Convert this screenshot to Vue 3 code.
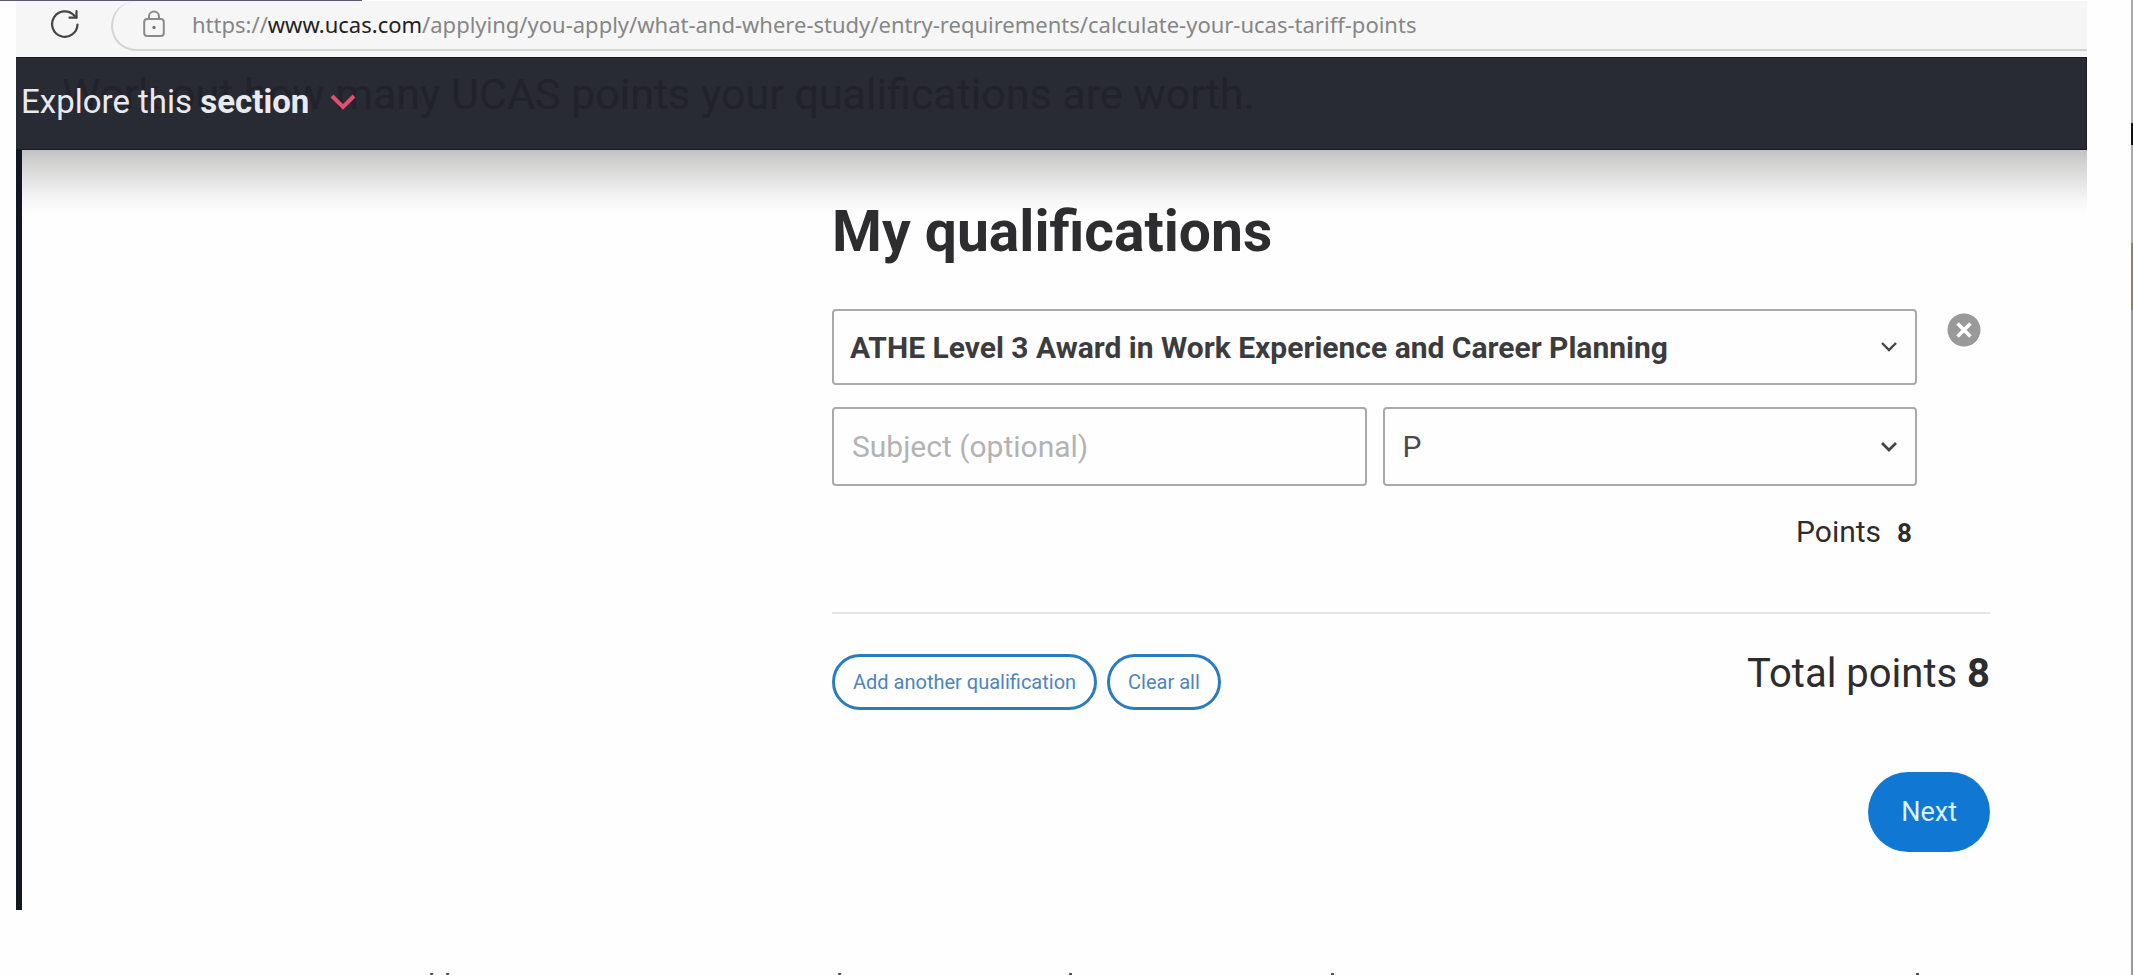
<script setup>
import { ref } from 'vue'

const qualification = ref('ATHE Level 3 Award in Work Experience and Career Planning')
const subject = ref('')
const grade = ref('P')
const tips = [431, 447, 839, 1070, 1332, 1917]
</script>

<template>
  <div class="page">
    <div class="column">
      <div class="window">
        <div class="toolbar">
          <button class="reload" type="button" aria-label="Reload">
            <svg width="30" height="30" viewBox="0 0 30 30" fill="none" stroke="#444" stroke-width="2.2" stroke-linecap="round" stroke-linejoin="round">
              <path d="M27.500 15.500a12.700 12.700 0 1 1-3.500-9.200L26.300 8.500" />
              <path d="M26.500 2v6.700h-7" />
            </svg>
          </button>
          <div class="address">
            <svg class="lock" width="22" height="28" viewBox="0 0 22 28" fill="none" stroke="#8b8b8b" stroke-width="2">
              <rect x="1.200" y="9" width="19.600" height="17" rx="3" />
              <path d="M6 9V6.500a5 5 0 0 1 10 0V9" />
              <circle cx="11" cy="17.500" r="1.700" fill="#777" stroke="none" />
            </svg>
            <span class="url">https://<span class="domain">www.ucas.com</span>/applying/you-apply/what-and-where-study/entry-requirements/calculate-your-ucas-tariff-points</span>
          </div>
        </div>

        <header class="section-bar">
          <p class="behind">Work out how many UCAS points your qualifications are worth.</p>
          <button class="explore" type="button">
            <span>Explore this <b>section</b></span>
            <svg width="26" height="18" viewBox="0 0 26 18" fill="none" stroke="#e2506f" stroke-width="4">
              <path d="M2 3l11 11L24 3" />
            </svg>
          </button>
        </header>

        <main class="main">
          <section class="content">
            <h1>My qualifications</h1>
            <div class="entry">
              <div class="fields">
                <div class="pick">
                  <select v-model="qualification" class="control strong" aria-label="Qualification">
                    <option>ATHE Level 3 Award in Work Experience and Career Planning</option>
                  </select>
                  <svg class="chevron" width="16" height="12" viewBox="0 0 16 12" fill="none" stroke="#444" stroke-width="2.400"><path d="M1 2l7 7 7-7" /></svg>
                </div>
                <div class="pair">
                  <input v-model="subject" class="control tall" type="text" placeholder="Subject (optional)" aria-label="Subject (optional)" />
                  <div class="pick">
                    <select v-model="grade" class="control tall" aria-label="Grade">
                      <option>P</option>
                    </select>
                    <svg class="chevron" width="16" height="12" viewBox="0 0 16 12" fill="none" stroke="#444" stroke-width="2.800"><path d="M1 2l7 7 7-7" /></svg>
                  </div>
                </div>
                <p class="points">Points <b>8</b></p>
              </div>
              <button class="remove" type="button" aria-label="Remove qualification">
                <svg width="34" height="34" viewBox="0 0 34 34">
                  <circle cx="17" cy="17" r="16.500" fill="#999" />
                  <path d="M10.500 10.500l13 13M23.500 10.500l-13 13" stroke="#fff" stroke-width="3.600" />
                </svg>
              </button>
            </div>
            <div class="summary">
              <div class="actions">
                <button class="outline" type="button">Add another qualification</button>
                <button class="outline" type="button">Clear all</button>
              </div>
              <p class="total">Total points <b>8</b></p>
            </div>
            <button class="next" type="button">Next</button>
          </section>
        </main>
      </div>
      <svg class="tips" height="2" viewBox="0 0 2131 2" preserveAspectRatio="none" aria-hidden="true">
        <rect v-for="x in tips" :key="x" :x="x - 1" y="0" width="3" height="2" fill="#555" />
      </svg>
    </div>
    <div class="edge"></div>
  </div>
</template>

<style>
body {
  margin: 0;
  background: #fefefe;
}
</style>

<style scoped>
.page {
  display: flex;
  min-height: 100vh;
  font-family: Roboto, "Liberation Sans", sans-serif;
  color: #2d2d2f;
}
.column {
  flex: 1;
  min-width: 0;
  display: flex;
  flex-direction: column;
  justify-content: space-between;
  padding-top: 1px;
  background: linear-gradient(to right, #5c5878, #5c5878) no-repeat 0 0 / 17% 1px;
}
.edge {
  width: 2px;
  background: linear-gradient(#aaa 0 123px, #111 123px 145px, #aaa 145px 243px, #8d8258 243px 310px, #999 310px);
}
p, h1 {
  margin: 0;
}
button {
  font: inherit;
  cursor: pointer;
}
.window {
  margin: 0 44px 0 16px;
}
.toolbar {
  display: flex;
  align-items: flex-start;
  gap: 31px;
  padding: 0 0 6px 33px;
  background: #f6f6f6;
}
.reload {
  margin-top: 8px;
  padding: 0;
  width: 31px;
  height: 30px;
  border: 0;
  background: none;
}
.address {
  flex: 1;
  box-sizing: border-box;
  display: flex;
  align-items: center;
  gap: 27px;
  height: 50px;
  padding-left: 30px;
  padding-bottom: 2px;
  border: 2px solid #d3d4d3;
  border-top: 0;
  border-right: 0;
  border-radius: 25px 0 0 25px;
}
.url {
  font-family: "Noto Sans", sans-serif;
  font-size: 22px;
  line-height: 30px;
  white-space: nowrap;
  color: #868686;
}
.domain {
  color: #222;
}
.section-bar {
  position: relative;
  box-sizing: border-box;
  height: 93px;
  padding: 24px 0 0 5px;
  background: #282a34;
  border: 1px solid #191b23;
  border-left: 0;
}
.behind {
  position: absolute;
  left: 46px;
  top: 10px;
  font-size: 43px;
  line-height: 52px;
  white-space: nowrap;
  color: #21222b;
}
.explore {
  position: relative;
  display: flex;
  align-items: center;
  gap: 21px;
  padding: 0;
  border: 0;
  background: none;
  color: #e9e9ee;
  font-size: 33px;
  line-height: 40px;
}
.main {
  padding-bottom: 58px;
  border-left: 6px solid #111824;
  background: linear-gradient(#c3c3c5 0, #cfcfcd 10px, #dedede 25px, #ebebeb 38px, #f6f6f6 50px, #fefefe 66px);
}
.content {
  max-width: 1158px;
  margin: 0 97px 0 auto;
  padding-top: 46px;
}
h1 {
  font-size: 57px;
  line-height: 72px;
  font-weight: 700;
}
.entry {
  display: flex;
  align-items: flex-start;
  gap: 30px;
  margin-top: 41px;
  padding-bottom: 61px;
  border-bottom: 2px solid #e4e4e4;
}
.fields {
  flex: 1;
}
.pick {
  position: relative;
}
.control {
  box-sizing: border-box;
  display: block;
  width: 100%;
  height: 76px;
  margin: 0;
  padding: 0 18px;
  border: 2px solid #a9a9a9;
  border-radius: 4px;
  background: #fefefe;
  appearance: none;
  font-family: inherit;
  font-size: 30px;
  color: #4a4a4c;
}
.control.tall {
  height: 79px;
}
.control.strong {
  padding: 0 16px;
  font-weight: 700;
  color: #3c3c3e;
}
.control::placeholder {
  color: #b3b3b3;
  opacity: 1;
}
.chevron {
  position: absolute;
  right: 20px;
  top: 50%;
  margin-top: -6px;
  pointer-events: none;
}
.pair {
  display: grid;
  grid-template-columns: 1fr 1fr;
  gap: 16px;
  margin-top: 22px;
}
.points {
  display: flex;
  justify-content: flex-end;
  align-items: baseline;
  gap: 16px;
  margin-top: 28px;
  padding-right: 5px;
  font-size: 30px;
  line-height: 36px;
}
.points b {
  font-size: 26px;
}
.remove {
  margin-top: 4px;
  margin-right: 9px;
  padding: 0;
  width: 34px;
  height: 34px;
  border: 0;
  background: none;
}
.summary {
  display: flex;
  justify-content: space-between;
  align-items: flex-start;
  padding-top: 36px;
}
.actions {
  display: flex;
  gap: 10px;
  padding-top: 4px;
}
.outline {
  box-sizing: border-box;
  height: 56px;
  padding: 0 18px;
  border: 3px solid #2a7cbe;
  border-radius: 28px;
  background: #fefefe;
  color: #4b86bd;
  font-size: 20px;
}
.total {
  font-size: 40px;
  line-height: 48px;
}
.next {
  display: block;
  margin: 62px 0 0 auto;
  padding: 0 33px;
  height: 80px;
  border: 0;
  border-radius: 40px;
  background: #1077d3;
  color: #d8f1ff;
  font-size: 27px;
}
.tips {
  display: block;
  width: 100%;
}
</style>
